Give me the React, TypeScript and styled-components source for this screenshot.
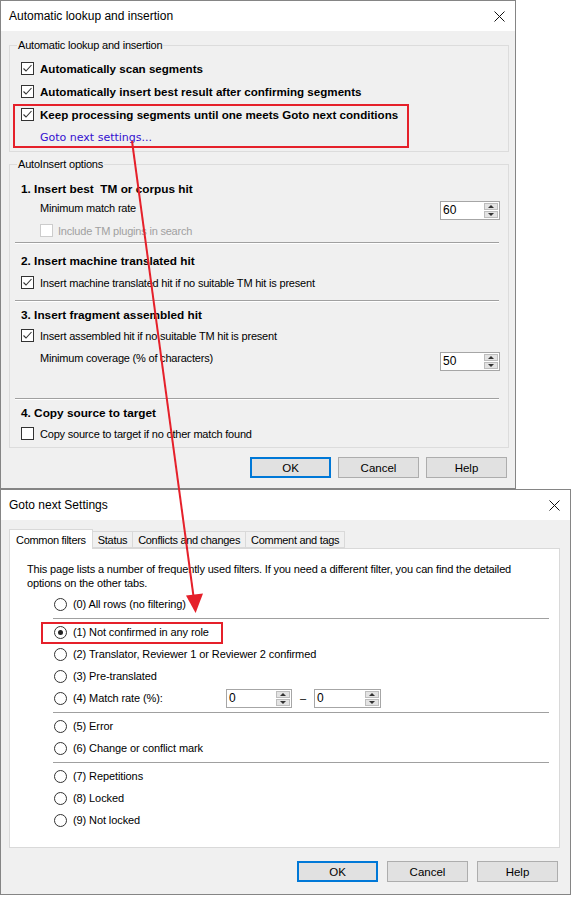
import React, { FC } from "react";
import styled, { createGlobalStyle } from "styled-components";

const GlobalStyle = createGlobalStyle`
  html, body {
    margin: 0;
    padding: 0;
    background: #fff;
  }
  body {
    font-family: "Liberation Sans", Arial, sans-serif;
    font-size: 11px;
    color: #000;
  }
  * {
    box-sizing: border-box;
  }
`;

const RED = "#e5202a";

const Page = styled.div`
  position: relative;
  width: 572px;
  height: 899px;
  overflow: hidden;
  background: #fff;
`;

const Window = styled.div<{ $w: number; $h: number }>`
  width: ${(p) => p.$w}px;
  height: ${(p) => p.$h}px;
  border: 1px solid #858585;
  background: #f0f0f0;
  display: flex;
  flex-direction: column;
`;

const TitleBar = styled.div`
  flex: none;
  height: 30px;
  background: #fff;
  display: flex;
  align-items: center;
  justify-content: space-between;
  padding: 0 10px 0 8px;
  font-size: 12px;
`;

const GroupBox = styled.fieldset<{ $mt: number; $pt: number; $pb: number }>`
  margin: ${(p) => p.$mt}px 6px 0 8px;
  padding: ${(p) => p.$pt}px 8px ${(p) => p.$pb}px 11px;
  border: 1px solid #dcdcdc;
  min-width: 0;
`;

const Legend = styled.legend`
  margin-left: -4px;
  padding: 0 1px;
  font-size: 11px;
  line-height: 13px;
  letter-spacing: -0.2px;
`;

const CheckRow = styled.div<{ $h?: number; $indent?: number; $bold?: boolean }>`
  display: flex;
  align-items: center;
  gap: ${(p) => (p.$indent ? 5 : 6)}px;
  height: ${(p) => p.$h ?? 21}px;
  padding-left: ${(p) => p.$indent ?? 0}px;
  font-size: ${(p) => (p.$bold ? "11.6px" : "11px")};
  font-weight: ${(p) => (p.$bold ? 700 : 400)};
  letter-spacing: ${(p) => (p.$bold ? "0" : "-0.2px")};
  white-space: nowrap;
`;

const Box = styled.span<{ $disabled?: boolean }>`
  flex: none;
  width: 13px;
  height: 13px;
  border: 1px solid ${(p) => (p.$disabled ? "#cccccc" : "#333")};
  background: #fff;
  display: flex;
  align-items: center;
  justify-content: center;
`;

const Muted = styled.span`
  color: #a0a0a0;
`;

const Highlight = styled.div`
  position: relative;
  width: fit-content;
  margin-top: 1px;
  &::after {
    content: "";
    position: absolute;
    left: -8px;
    right: -11px;
    top: 0;
    bottom: -2px;
    border: 2px solid ${RED};
    pointer-events: none;
  }
`;

const LinkRow = styled.div`
  height: 22px;
  padding: 4px 0 0 19px;
  line-height: 18px;
`;

const Link = styled.span`
  font-family: "DejaVu Sans", Verdana, sans-serif;
  font-size: 11px;
  color: #3411d0;
`;

const Section = styled.div<{ $pt: number }>`
  padding-top: ${(p) => p.$pt}px;
`;

const Heading = styled.div`
  height: 21px;
  display: flex;
  align-items: center;
  font-size: 11.8px;
  font-weight: 700;
  white-space: pre;
`;

const FieldRow = styled.div<{ $h: number; $mt?: number }>`
  display: flex;
  align-items: flex-end;
  justify-content: space-between;
  height: ${(p) => p.$h}px;
  margin-top: ${(p) => p.$mt ?? 0}px;
  padding-left: 19px;
`;

const FieldLabel = styled.span<{ $pb: number }>`
  align-self: center;
  padding-bottom: ${(p) => p.$pb}px;
  letter-spacing: -0.2px;
`;

const Separator = styled.div<{ $mt: number }>`
  height: 2px;
  margin: ${(p) => p.$mt}px 1px 0 -6px;
  border-top: 1px solid #a0a0a0;
  border-bottom: 1px solid #fff;
`;

const Spin = styled.div<{ $w: number }>`
  flex: none;
  display: flex;
  width: ${(p) => p.$w}px;
  height: 19px;
  border: 1px solid #a6a6a6;
  background: #fff;
`;

const SpinValue = styled.span`
  flex: 1;
  padding-left: 2px;
  font-size: 12px;
  line-height: 17px;
`;

const SpinButtons = styled.div`
  width: 16px;
  display: flex;
  flex-direction: column;
  gap: 1px;
  padding: 1px;
`;

const SpinArrow = styled.div<{ $down?: boolean }>`
  flex: 1;
  background: #e3e3e3;
  border: 1px solid #bdbdbd;
  display: flex;
  align-items: center;
  justify-content: center;
  &::before {
    content: "";
    border-left: 3px solid transparent;
    border-right: 3px solid transparent;
    ${(p) =>
      p.$down ? "border-top: 3px solid #333;" : "border-bottom: 3px solid #333;"}
  }
`;

const ButtonBar = styled.div<{ $mt: number; $gap: number; $pr: number }>`
  display: flex;
  justify-content: flex-end;
  gap: ${(p) => p.$gap}px;
  margin-top: ${(p) => p.$mt}px;
  padding-right: ${(p) => p.$pr}px;
`;

const Button = styled.div<{ $default?: boolean }>`
  width: 81px;
  height: 21px;
  display: flex;
  align-items: center;
  justify-content: center;
  background: #e1e1e1;
  border: ${(p) => (p.$default ? "2px solid #0078d7" : "1px solid #adadad")};
  font-size: 11.5px;
`;

/* Goto next dialog */

const TabStrip = styled.div`
  display: flex;
  align-items: flex-end;
  height: 19px;
  margin: 9px 0 0 8px;
`;

const Tab = styled.div<{ $active?: boolean }>`
  height: ${(p) => (p.$active ? 20 : 17)}px;
  margin-bottom: ${(p) => (p.$active ? -1 : 0)}px;
  margin-left: -1px;
  padding: 0 ${(p) => (p.$active ? 6 : 5)}px;
  display: flex;
  align-items: center;
  border: 1px solid #d9d9d9;
  border-bottom: ${(p) => (p.$active ? "none" : "1px solid #d9d9d9")};
  background: ${(p) => (p.$active ? "#fff" : "#f0f0f0")};
  position: relative;
  z-index: ${(p) => (p.$active ? 1 : 0)};
  letter-spacing: -0.3px;
  &:first-child {
    margin-left: 0;
  }
`;

const Panel = styled.div`
  height: 300px;
  margin: 0 10px 0 8px;
  padding: 13px 9px 0 17px;
  background: #fff;
  border: 1px solid #d9d9d9;
`;

const Description = styled.div`
  line-height: 14px;
  letter-spacing: -0.15px;
  white-space: nowrap;
`;

const RadioList = styled.div`
  margin-top: 3px;
`;

const RadioRow = styled.div`
  display: flex;
  align-items: center;
  height: 22px;
  padding-left: 27px;
  letter-spacing: -0.1px;
  white-space: nowrap;
`;

const RadioLabel = styled.span<{ $highlight?: boolean; $w?: number }>`
  position: relative;
  display: flex;
  align-items: center;
  gap: 6px;
  width: ${(p) => (p.$w ? `${p.$w}px` : "auto")};
  ${(p) =>
    p.$highlight &&
    `
    &::after {
      content: "";
      position: absolute;
      left: -13px;
      right: -14px;
      top: -4px;
      bottom: -5px;
      border: 2px solid ${RED};
    }
  `}
`;

const Circle = styled.span<{ $on?: boolean }>`
  flex: none;
  width: 13px;
  height: 13px;
  border-radius: 50%;
  border: 1px solid #333;
  background: #fff;
  display: flex;
  align-items: center;
  justify-content: center;
  &::before {
    content: "";
    width: 5px;
    height: 5px;
    border-radius: 50%;
    background: ${(p) => (p.$on ? "#222" : "transparent")};
  }
`;

const Dash = styled.span`
  width: 22px;
  text-align: center;
`;

const RadioSep = styled.div`
  height: 1px;
  margin: 3px 1px 2px 26px;
  background: #a0a0a0;
`;

const Overlay = styled.svg`
  position: absolute;
  left: 0;
  top: 0;
  pointer-events: none;
`;

const CloseIcon: FC = () => (
  <svg width="11" height="11" viewBox="0 0 11 11">
    <path d="M0.5 0.5L10.5 10.5M10.5 0.5L0.5 10.5" stroke="#111" strokeWidth="1" />
  </svg>
);

const CheckBox: FC<{ checked?: boolean; disabled?: boolean }> = ({
  checked,
  disabled,
}) => (
  <Box $disabled={disabled}>
    {checked && (
      <svg width="11" height="11" viewBox="0 0 11 11">
        <path d="M1.5 5.5L4 8L9.5 2" fill="none" stroke="#333" strokeWidth="1.1" />
      </svg>
    )}
  </Box>
);

const SpinBox: FC<{ value: string; w: number }> = ({ value, w }) => (
  <Spin $w={w}>
    <SpinValue>{value}</SpinValue>
    <SpinButtons>
      <SpinArrow />
      <SpinArrow $down />
    </SpinButtons>
  </Spin>
);

const Radio: FC<{
  label: string;
  on?: boolean;
  highlight?: boolean;
  w?: number;
}> = ({ label, on, highlight, w }) => (
  <RadioLabel $highlight={highlight} $w={w}>
    <Circle $on={on} />
    {label}
  </RadioLabel>
);

const AutoLookupDialog: FC = () => (
  <Window $w={516} $h={489}>
    <TitleBar>
      <span>Automatic lookup and insertion</span>
      <CloseIcon />
    </TitleBar>

    <GroupBox $mt={8} $pt={5} $pb={5}>
      <Legend>Automatic lookup and insertion</Legend>
      <CheckRow $h={23} $bold>
        <CheckBox checked />
        Automatically scan segments
      </CheckRow>
      <CheckRow $h={23} $bold>
        <CheckBox checked />
        Automatically insert best result after confirming segments
      </CheckRow>
      <Highlight>
        <CheckRow $h={20} $bold>
          <CheckBox checked />
          Keep processing segments until one meets Goto next conditions
        </CheckRow>
        <LinkRow>
          <Link>Goto next settings...</Link>
        </LinkRow>
      </Highlight>
    </GroupBox>

    <GroupBox $mt={6} $pt={0} $pb={3}>
      <Legend>AutoInsert options</Legend>
      <Section $pt={7}>
        <Heading>{"1. Insert best  TM or corpus hit"}</Heading>
        <FieldRow $h={21}>
          <FieldLabel $pb={3}>Minimum match rate</FieldLabel>
          <SpinBox value="60" w={60} />
        </FieldRow>
        <CheckRow $indent={19}>
          <CheckBox disabled />
          <Muted>Include TM plugins in search</Muted>
        </CheckRow>
      </Section>
      <Separator $mt={1} />
      <Section $pt={6}>
        <Heading>2. Insert machine translated hit</Heading>
        <CheckRow $h={23}>
          <CheckBox checked />
          Insert machine translated hit if no suitable TM hit is present
        </CheckRow>
      </Section>
      <Separator $mt={6} />
      <Section $pt={2}>
        <Heading>3. Insert fragment assembled hit</Heading>
        <CheckRow>
          <CheckBox checked />
          Insert assembled hit if no suitable TM hit is present
        </CheckRow>
        <FieldRow $h={23} $mt={2}>
          <FieldLabel $pb={4}>Minimum coverage (% of characters)</FieldLabel>
          <SpinBox value="50" w={60} />
        </FieldRow>
      </Section>
      <Separator $mt={27} />
      <Section $pt={2}>
        <Heading>4. Copy source to target</Heading>
        <CheckRow>
          <CheckBox />
          Copy source to target if no other match found
        </CheckRow>
      </Section>
    </GroupBox>

    <ButtonBar $mt={9} $gap={7} $pr={8}>
      <Button $default>OK</Button>
      <Button>Cancel</Button>
      <Button>Help</Button>
    </ButtonBar>
  </Window>
);

const GotoNextDialog: FC = () => (
  <Window $w={571} $h={406}>
    <TitleBar>
      <span>Goto next Settings</span>
      <CloseIcon />
    </TitleBar>

    <TabStrip>
      <Tab $active>Common filters</Tab>
      <Tab>Status</Tab>
      <Tab>Conflicts and changes</Tab>
      <Tab>Comment and tags</Tab>
    </TabStrip>

    <Panel>
      <Description>
        This page lists a number of frequently used filters. If you need a
        different filter, you can find the detailed
        <br />
        options on the other tabs.
      </Description>
      <RadioList>
        <RadioRow>
          <Radio label="(0) All rows (no filtering)" />
        </RadioRow>
        <RadioSep />
        <RadioRow>
          <Radio label="(1) Not confirmed in any role" on highlight />
        </RadioRow>
        <RadioRow>
          <Radio label="(2) Translator, Reviewer 1 or Reviewer 2 confirmed" />
        </RadioRow>
        <RadioRow>
          <Radio label="(3) Pre-translated" />
        </RadioRow>
        <RadioRow>
          <Radio label="(4) Match rate (%):" w={172} />
          <SpinBox value="0" w={66} />
          <Dash>–</Dash>
          <SpinBox value="0" w={67} />
        </RadioRow>
        <RadioSep />
        <RadioRow>
          <Radio label="(5) Error" />
        </RadioRow>
        <RadioRow>
          <Radio label="(6) Change or conflict mark" />
        </RadioRow>
        <RadioSep />
        <RadioRow>
          <Radio label="(7) Repetitions" />
        </RadioRow>
        <RadioRow>
          <Radio label="(8) Locked" />
        </RadioRow>
        <RadioRow>
          <Radio label="(9) Not locked" />
        </RadioRow>
      </RadioList>
    </Panel>

    <ButtonBar $mt={13} $gap={9} $pr={12}>
      <Button $default>OK</Button>
      <Button>Cancel</Button>
      <Button>Help</Button>
    </ButtonBar>
  </Window>
);

const App: FC = () => (
  <Page>
    <GlobalStyle />
    <AutoLookupDialog />
    <GotoNextDialog />
    {/* annotation arrow from the link down to option (1) */}
    <Overlay width="572" height="899" viewBox="0 0 572 899">
      <line x1="132" y1="141" x2="193.6" y2="597" stroke={RED} strokeWidth="2" />
      <polygon points="195.6,613 186,595.5 203,593.5" fill={RED} />
    </Overlay>
  </Page>
);

export default App;
